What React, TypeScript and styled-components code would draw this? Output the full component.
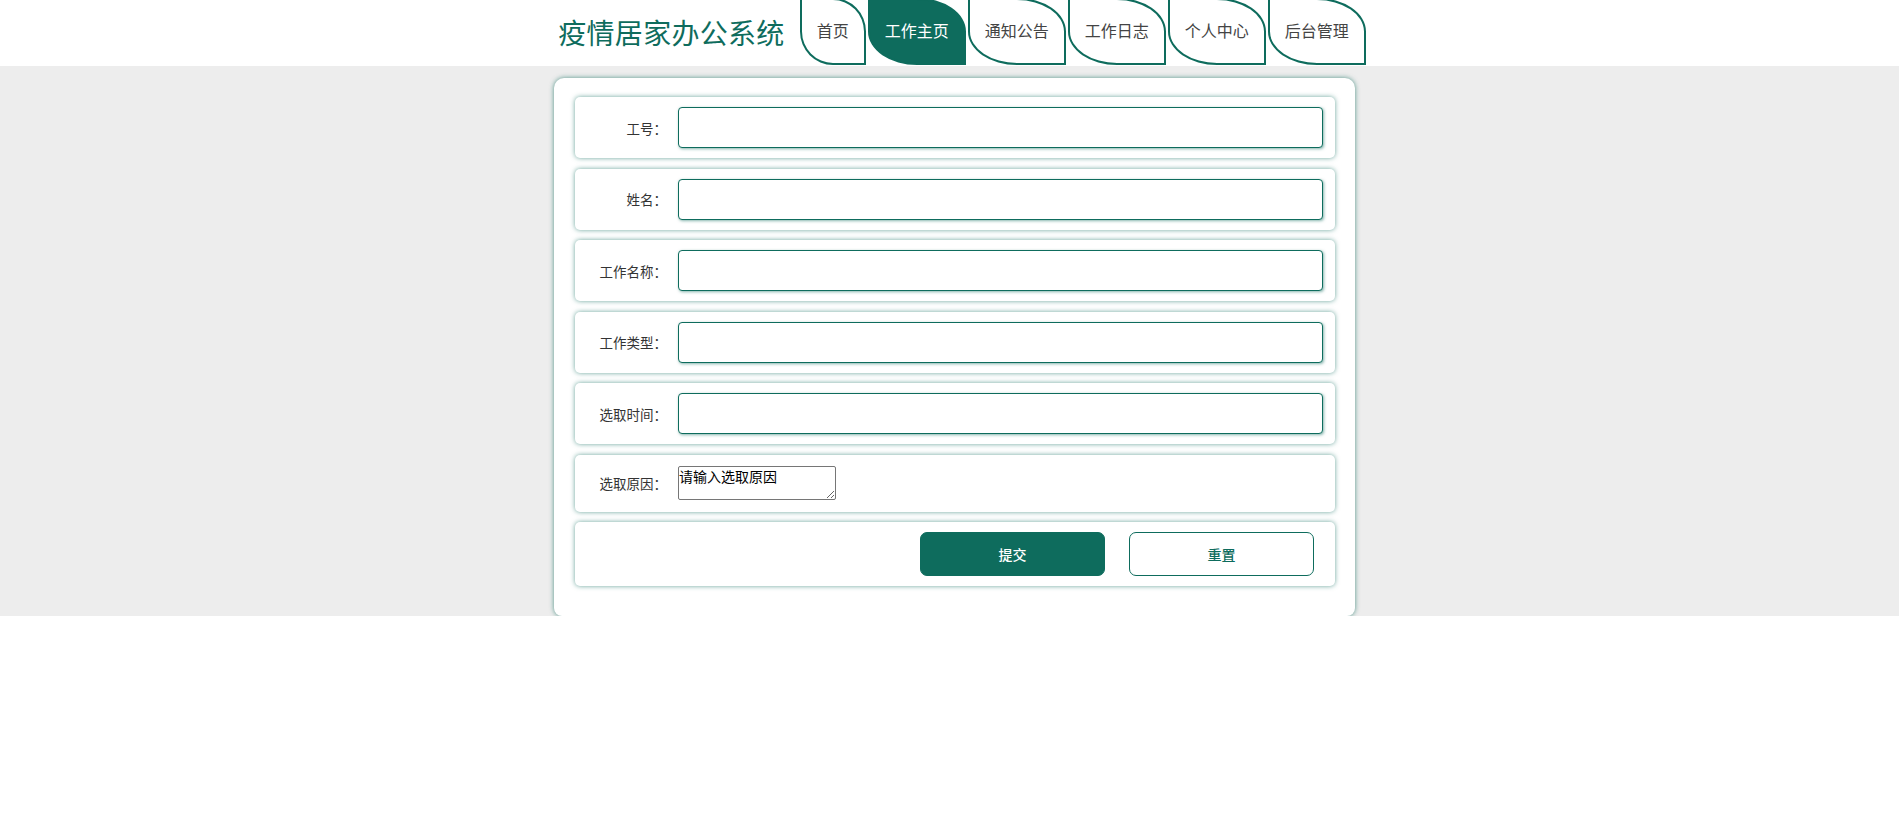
import React, { useState } from 'react';
import styled, { createGlobalStyle } from 'styled-components';

const GREEN = '#0e6c5d';

const GlobalStyle = createGlobalStyle`
  html, body {
    margin: 0;
    padding: 0;
    background: #fff;
    font-family: "Noto Sans CJK SC", "Noto Sans", sans-serif;
  }
`;

const Header = styled.header`
  height: 66px;
  display: flex;
  justify-content: center;
  align-items: flex-start;
  padding-left: 25px;
  background: #fff;
`;

const Title = styled.h1`
  margin: 12px 15px 0 0;
  font-size: 28px;
  line-height: 40px;
  font-weight: 400;
  color: ${GREEN};
  letter-spacing: 0.3px;
`;

const Nav = styled.nav`
  display: flex;
  gap: 2px;
  margin-top: -2px;
`;

const Tab = styled.a<{ $active?: boolean }>`
  display: flex;
  align-items: center;
  justify-content: center;
  box-sizing: border-box;
  height: 67px;
  padding: 0 15px 3px;
  border: 2px solid ${GREEN};
  border-radius: 0 50% 0 50%;
  background: ${p => (p.$active ? GREEN : '#fff')};
  color: ${p => (p.$active ? '#fff' : '#444')};
  font-size: 16px;
  text-decoration: none;
  cursor: pointer;
`;

const Main = styled.main`
  background: #ededed;
  padding-top: 12px;
  display: flex;
  justify-content: center;
`;

const Panel = styled.form`
  width: 801px;
  box-sizing: border-box;
  margin-left: 10px;
  padding: 19px 20px 30px 21px;
  background: #fff;
  border-radius: 10px 10px 8px 8px;
  box-shadow: 0 0 5px rgba(14, 108, 93, 0.7);
  display: flex;
  flex-direction: column;
  gap: 10.5px;
`;

const Row = styled.div<{ $pad?: string; $end?: boolean }>`
  display: flex;
  align-items: center;
  justify-content: ${p => (p.$end ? 'flex-end' : 'flex-start')};
  padding: ${p => p.$pad || '10px 12px 10px 0'};
  background: #fff;
  border-radius: 5px;
  box-shadow: 0 0 5px rgba(14, 108, 93, 0.62);
`;

const Label = styled.label`
  width: 92px;
  margin-right: 11px;
  text-align: right;
  font-size: 13.5px;
  color: #333;
`;

const Input = styled.input`
  flex: 1;
  height: 41px;
  box-sizing: border-box;
  border: 1px solid ${GREEN};
  border-radius: 4px;
  box-shadow: 1px 1px 3px rgba(14, 108, 93, 0.5);
  outline: none;
  padding: 0 10px;
  font-size: 14px;
  font-family: inherit;
`;

const TextArea = styled.textarea`
  width: 158px;
  height: 34px;
  box-sizing: border-box;
  margin: 0;
  padding: 0;
  border: 1px solid #767676;
  border-radius: 2px;
  font-size: 14px;
  line-height: 18px;
  font-family: inherit;
  color: #000;
`;

const Button = styled.button<{ $primary?: boolean }>`
  width: 185px;
  height: 44px;
  margin-left: 24px;
  box-sizing: border-box;
  border: 1px solid ${GREEN};
  border-radius: 7px;
  background: ${p => (p.$primary ? GREEN : '#fff')};
  color: ${p => (p.$primary ? '#fff' : GREEN)};
  font-size: 14px;
  font-weight: 500;
  font-family: inherit;
  cursor: pointer;
`;

const tabs = ['首页', '工作主页', '通知公告', '工作日志', '个人中心', '后台管理'];
const fields = ['工号', '姓名', '工作名称', '工作类型', '选取时间'];

export default function App() {
  const [reason, setReason] = useState('请输入选取原因');

  return (
    <>
      <GlobalStyle />
      <Header>
        <Title>疫情居家办公系统</Title>
        <Nav>
          {tabs.map(t => (
            <Tab key={t} $active={t === '工作主页'}>{t}</Tab>
          ))}
        </Nav>
      </Header>
      <Main>
        <Panel onSubmit={e => e.preventDefault()}>
          {fields.map(f => (
            <Row key={f}>
              <Label>{f}：</Label>
              <Input type="text" />
            </Row>
          ))}
          <Row $pad="11.5px 12px 11.5px 0">
            <Label>选取原因：</Label>
            <TextArea value={reason} onChange={e => setReason(e.target.value)} />
          </Row>
          <Row $end $pad="10px 21px 10px 0">
            <Button type="submit" $primary>提交</Button>
            <Button type="reset" onClick={() => setReason('请输入选取原因')}>重置</Button>
          </Row>
        </Panel>
      </Main>
    </>
  );
}
